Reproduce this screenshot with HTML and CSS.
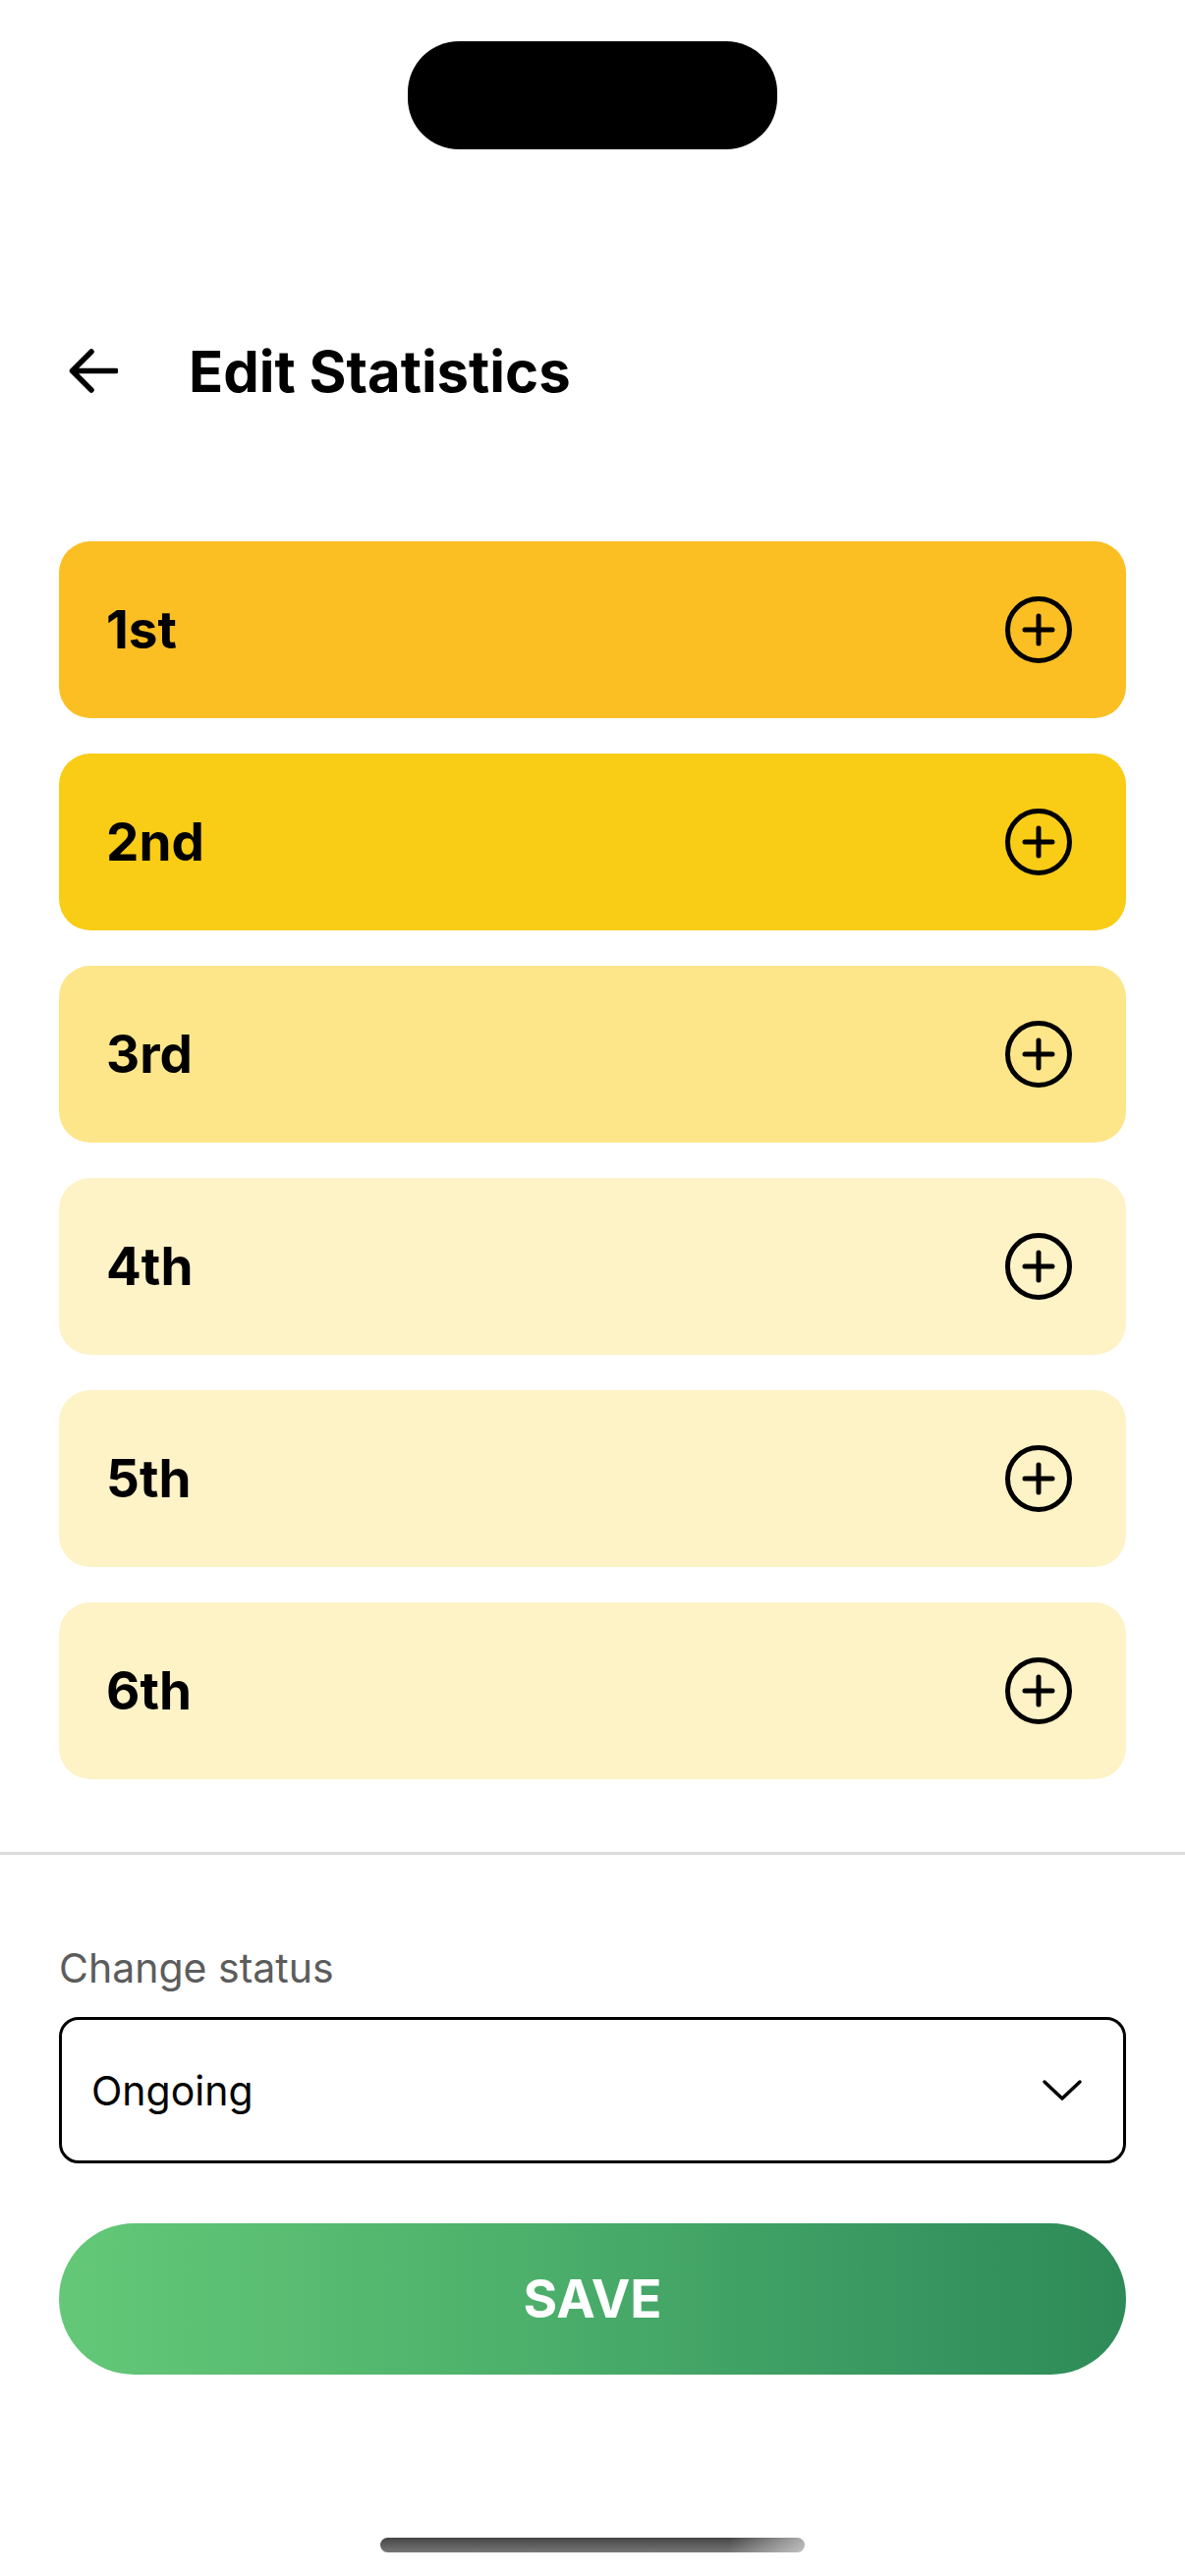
FILE: index.html
```html
<!DOCTYPE html>
<html lang="en">
<head>
<meta charset="utf-8">
<title>Edit Statistics</title>
<link rel="stylesheet" href="styles.css">
</head>
<body>
<div class="screen">
  <div class="island"></div>

  <header class="header">
    <svg class="back" width="60" height="60" viewBox="0 0 60 60" aria-hidden="true">
      <path d="M13.5 30.5 H58 M13.5 30.5 L33 11 M13.5 30.5 L33 50" fill="none" stroke="#000" stroke-width="5.5" stroke-linecap="round" stroke-linejoin="round"/>
    </svg>
    <h1 class="title">Edit Statistics</h1>
  </header>

  <ul class="places">
    <li class="place place-1"><span class="place-label">1st</span>
      <svg class="add" width="72" height="72" viewBox="0 0 72 72" aria-hidden="true"><circle cx="36" cy="36" r="31.5" fill="none" stroke="#000" stroke-width="5"/><path d="M36 22 V50 M22 36 H50" stroke="#000" stroke-width="5" stroke-linecap="round"/></svg></li>
    <li class="place place-2"><span class="place-label">2nd</span>
      <svg class="add" width="72" height="72" viewBox="0 0 72 72" aria-hidden="true"><circle cx="36" cy="36" r="31.5" fill="none" stroke="#000" stroke-width="5"/><path d="M36 22 V50 M22 36 H50" stroke="#000" stroke-width="5" stroke-linecap="round"/></svg></li>
    <li class="place place-3"><span class="place-label">3rd</span>
      <svg class="add" width="72" height="72" viewBox="0 0 72 72" aria-hidden="true"><circle cx="36" cy="36" r="31.5" fill="none" stroke="#000" stroke-width="5"/><path d="M36 22 V50 M22 36 H50" stroke="#000" stroke-width="5" stroke-linecap="round"/></svg></li>
    <li class="place place-4"><span class="place-label">4th</span>
      <svg class="add" width="72" height="72" viewBox="0 0 72 72" aria-hidden="true"><circle cx="36" cy="36" r="31.5" fill="none" stroke="#000" stroke-width="5"/><path d="M36 22 V50 M22 36 H50" stroke="#000" stroke-width="5" stroke-linecap="round"/></svg></li>
    <li class="place place-4"><span class="place-label">5th</span>
      <svg class="add" width="72" height="72" viewBox="0 0 72 72" aria-hidden="true"><circle cx="36" cy="36" r="31.5" fill="none" stroke="#000" stroke-width="5"/><path d="M36 22 V50 M22 36 H50" stroke="#000" stroke-width="5" stroke-linecap="round"/></svg></li>
    <li class="place place-4"><span class="place-label">6th</span>
      <svg class="add" width="72" height="72" viewBox="0 0 72 72" aria-hidden="true"><circle cx="36" cy="36" r="31.5" fill="none" stroke="#000" stroke-width="5"/><path d="M36 22 V50 M22 36 H50" stroke="#000" stroke-width="5" stroke-linecap="round"/></svg></li>
  </ul>

  <div class="divider"></div>

  <section class="status">
    <div class="status-label">Change status</div>
    <div class="select">
      <span class="select-value">Ongoing</span>
      <svg class="chevron" width="42" height="26" viewBox="0 0 42 26" aria-hidden="true"><path d="M3 4 L21 21 L39 4" fill="none" stroke="#000" stroke-width="3.5" stroke-linecap="round" stroke-linejoin="round"/></svg>
    </div>
    <button class="save" type="button">SAVE</button>
  </section>

  <div class="home-indicator"></div>
</div>
</body>
</html>
```

FILE: styles.css
```css
* { box-sizing: border-box; }

html, body {
  margin: 0;
  padding: 0;
  background: #fff;
}

body {
  font-family: Inter, "Noto Sans", "Liberation Sans", sans-serif;
  color: #000;
}

.screen {
  width: 1206px;
  min-height: 2622px;
  display: flex;
  flex-direction: column;
}

.island {
  align-self: center;
  width: 376px;
  height: 110px;
  margin-top: 42px;
  background: #000;
  border-radius: 52px;
}

.header {
  display: flex;
  align-items: center;
  height: 70px;
  margin-top: 191px;
  padding-left: 60px;
}

.back {
  flex: none;
  margin-top: -3px;
}

.title {
  margin: 0 0 0 72px;
  font-size: 58px;
  line-height: 70px;
  font-weight: 700;
  letter-spacing: 0;
}

.places {
  list-style: none;
  margin: 138px 0 0;
  padding: 0 60px;
  display: flex;
  flex-direction: column;
  gap: 36px;
}

.place {
  height: 180px;
  border-radius: 32px;
  display: flex;
  align-items: center;
  justify-content: space-between;
  padding: 0 53px 0 48px;
}

.place-1 { background: #fbbf24; }
.place-2 { background: #f9cc16; }
.place-3 { background: #fde68a; }
.place-4 { background: #fef2c7; }

.place-label {
  font-size: 53px;
  font-weight: 700;
  letter-spacing: 0;
  line-height: 1;
}

.add { flex: none; }

.divider {
  height: 3px;
  margin-top: 74px;
  background: #dcdcdc;
}

.status {
  display: flex;
  flex-direction: column;
  padding: 0 60px;
}

.status-label {
  margin-top: 90px;
  font-size: 41px;
  line-height: 50px;
  color: #5c5c5c;
}

.select {
  margin-top: 25px;
  height: 149px;
  border: 3px solid #000;
  border-radius: 20px;
  display: flex;
  align-items: center;
  justify-content: space-between;
  padding: 0 41px 0 30px;
}

.select-value {
  font-size: 41px;
}

.chevron { flex: none; }

.save {
  margin-top: 61px;
  height: 154px;
  border: none;
  border-radius: 77px;
  background: linear-gradient(90deg, #64c878 0%, #4fb26c 40%, #3a9a62 75%, #2e8b57 100%);
  color: #fff;
  font-family: Inter, "Noto Sans", "Liberation Sans", sans-serif;
  font-size: 53px;
  font-weight: 700;
  letter-spacing: 0;
  padding: 0;
}

.home-indicator {
  align-self: center;
  width: 432px;
  height: 15px;
  margin-top: 166px;
  border-radius: 8px;
  background:
    linear-gradient(90deg, rgba(255,255,255,0) 82%, rgba(255,255,255,0.55) 100%),
    linear-gradient(180deg, #444 0%, #777 100%);
}
```
